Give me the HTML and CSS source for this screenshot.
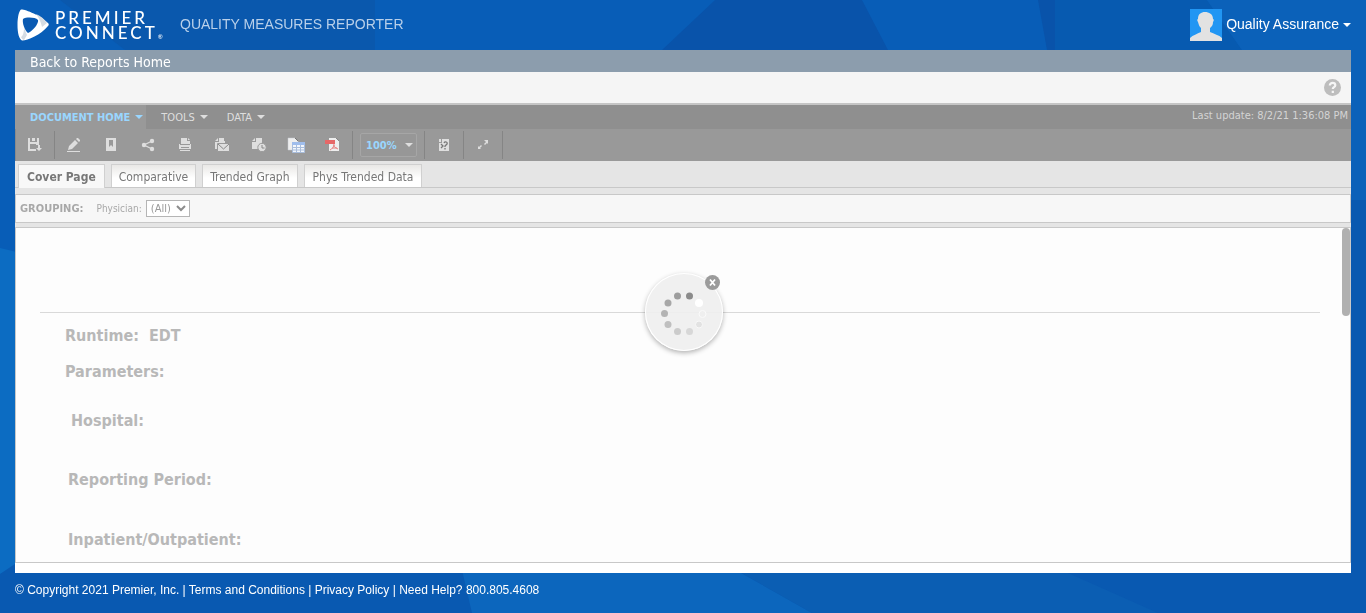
FILE: index.html
```html
<!DOCTYPE html>
<html lang="en">
<head>
<meta charset="utf-8">
<meta name="viewport" content="width=device-width, initial-scale=1">
<title>Quality Measures Reporter</title>
<link rel="stylesheet" href="styles.css">
</head>
<body>
<svg class="backdrop" viewBox="0 0 1366 613" preserveAspectRatio="none" aria-hidden="true">
  <path fill="#085db7" d="M0 0h1366v613H0z"/>
  <path fill="#0a58ad" d="M60 0h315v50H125z"/>
  <path fill="#0953aa" d="M715 0h147l26 50H662z"/>
  <path fill="#0953aa" d="M1038 0h17v50h-8z"/>
  <path fill="#075ab0" d="M1055 0h152l35 50h-187z"/>
  <path fill="#0b61b9" d="M1207 0h159v200h-60l-64-150z"/>
  <path fill="#0959b0" d="M1340 200h26v413h-26z"/>
  <path fill="#0c6cc2" d="M0 248l25 6v313L0 574z"/>
  <path fill="#0959b1" d="M0 574l18-12h1348v51H0z"/>
  <path fill="#0c66bd" d="M462 570h274l76 43H472z"/>
  <path fill="#0b5eb3" d="M736 570h312l20 3 90 40H812z"/>
</svg>

<div class="page">
  <header class="header">
    <a class="brand" href="#">
      <svg class="brand-mark" viewBox="0 0 32 32" aria-hidden="true">
        <path fill="#fff" d="M4 .5C6-.5 24 6 31 14c1 1 1 2 0 3C24 26 9 32 5 31.500 2 30 .5 24 .5 16S2 2 4 .5z"/>
        <path fill="#d5dce3" d="M19 5c5 2 8 5 11 9l-5 4c-1-5-3-9-6-13zM4 28c2-1 3-5 3-9l3 7-3 5c-1 0-2-1-3-3z"/>
        <path fill="#0a5ab2" d="M6 10c3-2 12-2 15 1 1 3-5 11-10 13-3-2-6-10-5-14z"/>
      </svg>
      <span class="brand-name"><span>PREMIER</span><span>CONNECT<sup>®</sup></span></span>
    </a>
    <span class="product">QUALITY MEASURES REPORTER</span>
    <button class="account" type="button">
      <svg class="avatar" viewBox="0 0 32 32" aria-hidden="true">
        <path fill="#2196f3" d="M0 0h32v32H0z"/>
        <path fill="#e2e2e2" d="M0 32v-3c3-3 7-4 11-6v-4c-2-2-2-3-3-6-1-1-1-3 0-3 0-5 3-7 7-7s8 2 8 7c1 0 1 2 0 3 0 3-1 4-3 6v4c4 2 9 3 12 6v3z"/>
      </svg>
      <span class="account-name">Quality Assurance</span><i class="caret"></i>
    </button>
  </header>

  <main class="frame">
    <nav class="backbar"><a href="#">Back to Reports Home</a></nav>
    <div class="helpbar">
      <button class="help" type="button" aria-label="Help">
        <svg viewBox="0 0 17 17"><circle cx="8.500" cy="8.500" r="8.500" fill="#bdbdbd"/><path d="M5.800 6.600c0-3.700 5.500-3.300 5.500-.4 0 1.900-2.500 1.900-2.500 3.700M8.800 11.700v2.200" fill="none" stroke="#f5f5f5" stroke-width="2.200"/></svg>
      </button>
    </div>

    <div class="menubar">
      <button class="menu active" type="button">DOCUMENT HOME<i class="caret"></i></button>
      <button class="menu" type="button">TOOLS<i class="caret"></i></button>
      <button class="menu" type="button">DATA<i class="caret"></i></button>
      <span class="updated">Last update: 8/2/21 1:36:08 PM</span>
    </div>

    <div class="toolbar">
      <div class="group">
        <button class="tool" type="button" aria-label="Save"><svg viewBox="0 0 16 16"><path fill="#dedede" d="M1 1h2v4h7V1h2v7H9v-1H3v5h6v2H1zM5 1h3v3H5zM11 8h2v3h2l-3 3-3-3h2z"/></svg></button>
      </div>
      <div class="group">
        <button class="tool" type="button" aria-label="Edit"><svg viewBox="0 0 16 16"><path fill="#dedede" d="M1 14h13v1H1zM3 9l6-6 3 3-6 6-4 1zM10 2l1-1h1l2 2v1l-1 1z"/></svg></button>
        <button class="tool" type="button" aria-label="Bookmark"><svg viewBox="0 0 16 16"><path fill="#dedede" fill-rule="evenodd" d="M3 1h10v13H3zm3 2v7l2-2 2 2V3z"/></svg></button>
        <button class="tool" type="button" aria-label="Share"><svg viewBox="0 0 16 16"><path d="M12 4 4 8l8 4" stroke="#dedede" stroke-width="1.300" fill="none"/><g fill="#dedede"><circle cx="12" cy="4" r="2.200"/><circle cx="4" cy="8" r="2.200"/><circle cx="12" cy="12" r="2.200"/></g></svg></button>
        <button class="tool" type="button" aria-label="Print"><svg viewBox="0 0 16 16"><path fill="#dedede" d="M4 1h6v3h3v3H4zM11 1l2 2h-2zM2 7h1v1h10V7h1v5H2zM3 13h10v1H3z"/><path fill="#999" d="M4 10h8v1H4z"/></svg></button>
        <button class="tool" type="button" aria-label="Send by mail"><svg viewBox="0 0 16 16"><path fill="#dedede" d="M5 1h5v3h1v2H4v6H1V5h4zM1 4l3-3v3z"/><path fill="#dedede" stroke="#999" d="M3.500 6.500h12v8h-12z"/><path fill="none" stroke="#888" d="m4 7 5.500 5L15 7"/></svg></button>
        <button class="tool" type="button" aria-label="Schedule"><svg viewBox="0 0 16 16"><path fill="#dedede" d="M5 1h6v6L7 12H1V5h4zM1 4l3-3v3z"/><circle cx="11" cy="10.500" r="4.200" fill="#dedede" stroke="#999"/><path d="M11 8v3h2.500" stroke="#888" fill="none"/></svg></button>
        <button class="tool" type="button" aria-label="Export to Excel"><svg class="wide" viewBox="0 0 18 16"><path fill="#eee" stroke="#c6cbd2" stroke-width=".5" d="M1 1h7l3 3v9H1z"/><path fill="none" stroke="#777" d="M8 1l3 3"/><path fill="#f2f6fc" stroke="#a9bddb" d="M5.500 5.500h12v10h-12z"/><path fill="#9fbdec" d="M5 5h13v3H5z"/><path fill="none" stroke="#a9bddb" d="M9.500 8v8M13.500 8v8M5 10.500h13M5 13h13"/></svg></button>
        <button class="tool" type="button" aria-label="Export to PDF"><svg viewBox="0 0 16 16"><path fill="#eee" d="M4 1h7l3 3v10H4z"/><path stroke="#888" fill="none" d="m11 1 3 3"/><path fill="#e66767" d="M0 3h10v4H0z"/><path fill="none" stroke="#e88080" d="M9 7c0 3-2 5-4 6M9 8c0 2 2 3 4 4M7 11h5"/></svg></button>
      </div>
      <div class="group">
        <span class="picker">
          <select class="zoom" aria-label="Zoom"><option>100%</option></select>
          <i class="caret"></i>
        </span>
      </div>
      <div class="group">
        <button class="tool" type="button" aria-label="Refresh prompts"><svg viewBox="0 0 16 16"><path fill="#dedede" d="M6 2h7v12H3V6h3zM3 2h2v3H3z"/><path d="M8 6c1-2 4-1 3 1l-2 2v1M9 11v1.500M5 7l2 2-2 2" fill="none" stroke="#777" stroke-width="1.300"/></svg></button>
      </div>
      <div class="group">
        <button class="tool" type="button" aria-label="Full screen"><svg viewBox="0 0 16 16"><path fill="#dedede" d="M9 3h4v4l-1-1-2 2-1-1 2-2zM3 9l1 1 2-2 1 1-2 2 1 1H3z"/></svg></button>
      </div>
    </div>

    <div class="tabs">
      <button class="tab current" type="button">Cover Page</button>
      <button class="tab" type="button">Comparative</button>
      <button class="tab" type="button">Trended Graph</button>
      <button class="tab" type="button">Phys Trended Data</button>
    </div>

    <div class="grouping">
      <strong>GROUPING:</strong>
      <label for="physician">Physician:</label>
      <span class="picker"><select class="physician" id="physician"><option>(All)</option></select><svg viewBox="0 0 10 7" aria-hidden="true"><path d="m1 1 4 4 4-4" fill="none" stroke="#8c8c8c" stroke-width="2"/></svg></span>
    </div>

    <section class="document">
      <div class="report">
        <p>Runtime:&nbsp; EDT</p>
        <p>Parameters:</p>
        <p class="hospital">Hospital:</p>
        <p class="field">Reporting Period:</p>
        <p class="field">Inpatient/Outpatient:</p>
      </div>
      <div class="scroll-thumb"></div>
      <div class="loader" role="status" aria-label="Loading">
        <svg viewBox="0 0 78 78" aria-hidden="true">
          <circle cx="54" cy="30" r="4" fill="#fff"/><circle cx="32.500" cy="23" r="3.500" fill="#9d9d9d"/>
          <circle cx="44.500" cy="23" r="3.500" fill="#8b8b8b"/><circle cx="23" cy="30" r="3.500" fill="#a7a7a7"/>
          <circle cx="19.500" cy="40.500" r="3.500" fill="#b3b3b3"/><circle cx="23" cy="51.500" r="3.500" fill="#bfbfbf"/>
          <circle cx="32.500" cy="58.500" r="3.500" fill="#cbcbcb"/><circle cx="44.500" cy="58.500" r="3.500" fill="#d7d7d7"/>
          <circle cx="54" cy="51.500" r="3.500" fill="#e2e2e2" stroke="#f8f8f8"/><circle cx="57.500" cy="41" r="3.500" fill="#efefef" stroke="#fafafa"/>
        </svg>
        <button class="cancel" type="button" aria-label="Cancel"><svg viewBox="0 0 15 15"><path d="m5 4.500 5 6m0-6-5 6" stroke="#fff" stroke-width="1.800"/></svg></button>
      </div>
    </section>
  </main>

  <footer class="footer">
    <span>© Copyright 2021 Premier, Inc.</span> | <a href="#">Terms and Conditions</a> | <a href="#">Privacy Policy</a> | <span>Need Help? 800.805.4608</span>
  </footer>
</div>
</body>
</html>
```
FILE: styles.css
```css
* { box-sizing: border-box; }
body {
  margin: 0;
  background: #085db7;
  font-family: "DejaVu Sans Condensed", "DejaVu Sans", sans-serif;
  font-size: 12px;
}
button, select { font: inherit; color: inherit; margin: 0; }
button { padding: 0; border: 0; background: none; }
a { color: inherit; text-decoration: none; }
svg { display: block; }
.backdrop { position: fixed; inset: 0; width: 100%; height: 100%; z-index: -1; }
.page { display: flex; flex-direction: column; min-height: 100vh; padding: 0 15px; }

.header {
  display: flex; align-items: center; height: 50px;
  font-family: "Liberation Sans", Arial, sans-serif; font-size: 14px; color: #fff;
}
.brand { display: flex; align-items: center; gap: 6px; padding-left: 2px; }
.brand-mark { width: 32px; height: 32px; }
.brand-name {
  display: flex; flex-direction: column; width: 110px;
  font: 500 17px/15px Lato, sans-serif; letter-spacing: 3px; white-space: nowrap;
}
.brand-name sup { font-size: 6px; line-height: 1px; vertical-align: 0; letter-spacing: 0; }
.product { margin-left: 15px; padding-bottom: 2px; line-height: 18px; color: #b9d0ea; }
.account { display: flex; align-items: center; gap: 4px; margin-left: auto; }
.account-name { padding-bottom: 2px; }
.avatar { width: 32px; height: 32px; }
.caret { border: 4px solid transparent; border-top-color: currentColor; border-bottom: 0; }

.frame { display: flex; flex: 1; flex-direction: column; padding-bottom: 10px; background: #fff; }
.backbar { padding: 3px 15px 0; background: #8c9dad; color: #fff; font-size: 14px; line-height: 19px; }
.helpbar { display: flex; justify-content: flex-end; padding: 7px 10px; background: #f5f5f5; border-bottom: 2px solid #c5c5c5; }
.help svg { width: 17px; height: 17px; }

.menubar { display: flex; align-items: stretch; height: 24px; background: #8f8f8f; color: #dedede; font-size: 11px; }
.menu { display: flex; align-items: center; gap: 5px; padding-left: 15px; padding-right: 4px; }
.menu.active { padding-right: 3px; background: #999; color: #99d6ff; font-weight: bold; }
.updated { margin-left: auto; padding-right: 3px; line-height: 21px; color: #d4d4d4; }

.toolbar { display: flex; height: 32px; border-left: 1px solid #8a8a8a; background: #999; color: #dedede; }
.group { display: flex; align-items: center; gap: 13px; margin: 2px 0; padding: 0 7px; border-right: 1px solid #858585; }
.tool { display: grid; place-items: center; width: 24px; height: 24px; }
.tool svg { width: 16px; height: 16px; }
.tool .wide { width: 18px; }
.picker { display: grid; align-items: center; }
.picker > * { grid-area: 1 / 1; }
.picker > .caret { justify-self: end; margin-right: 4px; pointer-events: none; }
.zoom {
  width: 57px; height: 24px; padding: 0 5px; border: 1px solid #a6a6a6; border-radius: 2px;
  appearance: none; color: #99d6ff; font-size: 11px; font-weight: bold; background: #979797;
}

.tabs { display: flex; gap: 6px; height: 27px; padding: 3px 3px 0; background: #e5e5e5; border-bottom: 1px solid #c8c8c8; }
.tab { padding: 1px 7px 0; border: 1px solid #d0d0d0; border-bottom: 0; background: linear-gradient(#e9e8e6, #fff 60%); color: #777; }
.tab:last-child { padding: 1px 8px 0; }
.tab.current { margin-bottom: -1px; padding: 0 8px; background: #f8f8f8; font-weight: bold; }

.grouping {
  display: flex; align-items: center; height: 29px; margin-top: 6px; padding: 0 4px;
  border: 1px solid #c8c8c8; background: #f7f7f7; color: #a8a8a8; font-size: 11px;
  box-shadow: 0 -6px #e5e5e5, 0 4px #e5e5e5;
}
.grouping label { margin-left: 13px; margin-right: 4px; font-size: 10px; }
.physician { width: 44px; height: 17px; padding: 0 4px; border: 1px solid #b5b5b5; background: #fff; appearance: none; color: #999; }
.picker > svg { width: 10px; height: 7px; justify-self: end; margin-right: 4px; pointer-events: none; }

.document { position: relative; flex: 1; margin-top: 4px; padding: 84px 30px 12px 24px; border: 1px solid #c8c8c8; background: #fdfdfd; }
.report { padding: 13px 25px 0; border-top: 1px solid #d9d9d9; color: #b8b8b8; font-size: 16px; font-weight: bold; line-height: 20px; }
.report p { margin: 0 0 16px; }
.report .hospital { margin: 29px 6px 39px; }
.report .field { margin: 0 3px 40px; }
.report .field:last-child { margin-bottom: 0; }
.scroll-thumb { position: absolute; top: 0; right: 0; width: 8px; height: 88px; border-radius: 4px; background: #b0b0b0; }
.loader {
  position: absolute; top: 45px; left: 50%; width: 78px; height: 78px; margin-left: -38px;
  border-radius: 50%; background: rgba(238, 238, 238, .9);
  box-shadow: inset 0 0 0 1px #fff, 0 2px 5px rgba(0, 0, 0, .3);
}
.cancel { position: absolute; top: 2px; right: 3px; width: 15px; height: 15px; border-radius: 50%; background: #9b9b9b; }

.footer { padding: 10px 0 15px; color: #fff; font: 12px/15px "Liberation Sans", Arial, sans-serif; }
```
